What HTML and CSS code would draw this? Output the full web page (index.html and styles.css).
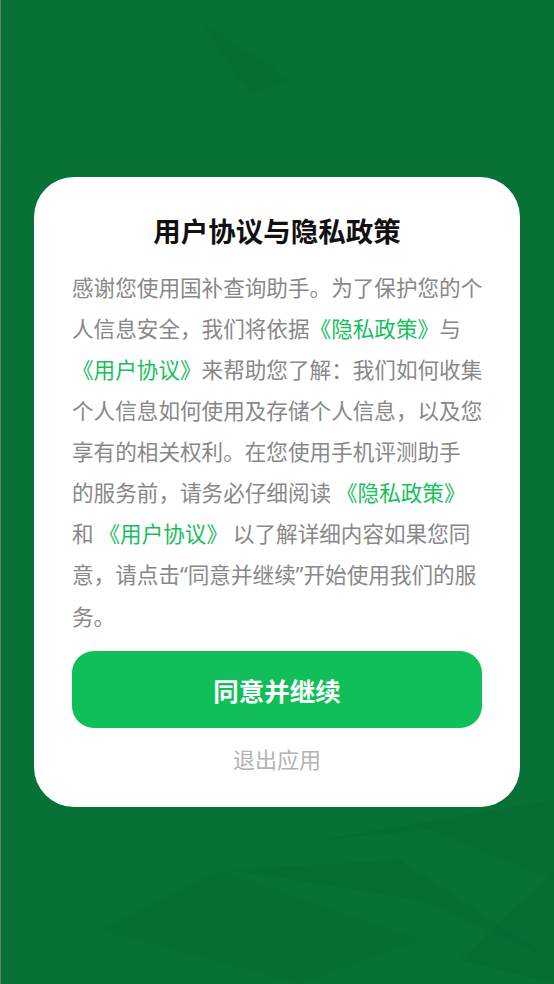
FILE: index.html
```html
<!DOCTYPE html>
<html lang="zh-CN">
<head>
<meta charset="utf-8">
<title>用户协议与隐私政策</title>
<link rel="stylesheet" href="styles.css">
</head>
<body>
<div class="page">
  <div class="card">
    <h1 class="title">用户协议与隐私政策</h1>
    <p class="body">感谢您使用国补查询助手。为了保护您的个人信息安全，我们将依据<span class="link">《隐私政策》</span>与<span class="link">《用户协议》</span>来帮助您了解：我们如何收集个人信息如何使用及存储个人信息，以及您享有的相关权利。在您使用手机评测助手<br>的服务前，请务必仔细阅读 <span class="link">《隐私政策》</span>和 <span class="link">《用户协议》</span> 以了解详细内容如果您同意，请点击<span class="quote">“</span>同意并继续<span class="quote">”</span>开始使用我们的服务。</p>
    <button class="agree">同意并继续</button>
    <div class="exit">退出应用</div>
  </div>
</div>
</body>
</html>
```

FILE: styles.css
```css
html, body {
  margin: 0;
  padding: 0;
}
body {
  width: 554px;
  height: 984px;
  overflow: hidden;
  font-family: "Noto Sans CJK SC", "Noto Sans", sans-serif;
  background-color: #087135;
  background-image: url("data:image/svg+xml;utf8,<svg xmlns='http://www.w3.org/2000/svg' width='554' height='984'><polygon points='0,140 100,30 290,60 90,150' fill='%23006030' fill-opacity='0.04'/><polygon points='200,20 290,80 250,95' fill='%23004020' fill-opacity='0.04'/><polygon points='100,930 220,870 420,940 300,984' fill='%23004020' fill-opacity='0.04'/><polygon points='230,870 420,900 554,960 400,860' fill='%23003a1c' fill-opacity='0.04'/><polygon points='320,840 554,800 554,880 430,830' fill='%23003a1c' fill-opacity='0.04'/><polygon points='460,960 554,870 554,984' fill='%23003a1c' fill-opacity='0.04'/></svg>");
  background-repeat: no-repeat;
}
.page {
  height: 984px;
  box-sizing: border-box;
  border-left: 1px solid #62806b;
  padding-top: 177px;
  padding-left: 33px;
}
.card {
  width: 486px;
  height: 630px;
  box-sizing: border-box;
  background: #ffffff;
  border-radius: 40px;
  padding: 34px 38px 0 38px;
  display: flex;
  flex-direction: column;
  align-items: stretch;
}
.title {
  margin: 0;
  font-size: 27.5px;
  line-height: 38px;
  font-weight: 700;
  color: #111111;
  text-align: center;
}
.body {
  margin: 17px 0 0 0;
  font-size: 21.6px;
  line-height: 41px;
  color: #888888;
  width: 412px;
}
.link {
  color: #14c05c;
}
.quote {
  font-family: "Noto Sans", "Roboto", sans-serif;
}
.agree {
  margin-top: 15px;
  height: 77px;
  width: 410px;
  border: none;
  border-radius: 22px;
  background: #10bf59;
  color: #ffffff;
  font-family: "Noto Sans CJK SC", "Noto Sans", sans-serif;
  font-size: 25.5px;
  font-weight: 700;
  padding: 0;
}
.exit {
  margin-top: 15px;
  font-size: 22px;
  line-height: 30px;
  color: #b3b3b3;
  text-align: center;
}
```
